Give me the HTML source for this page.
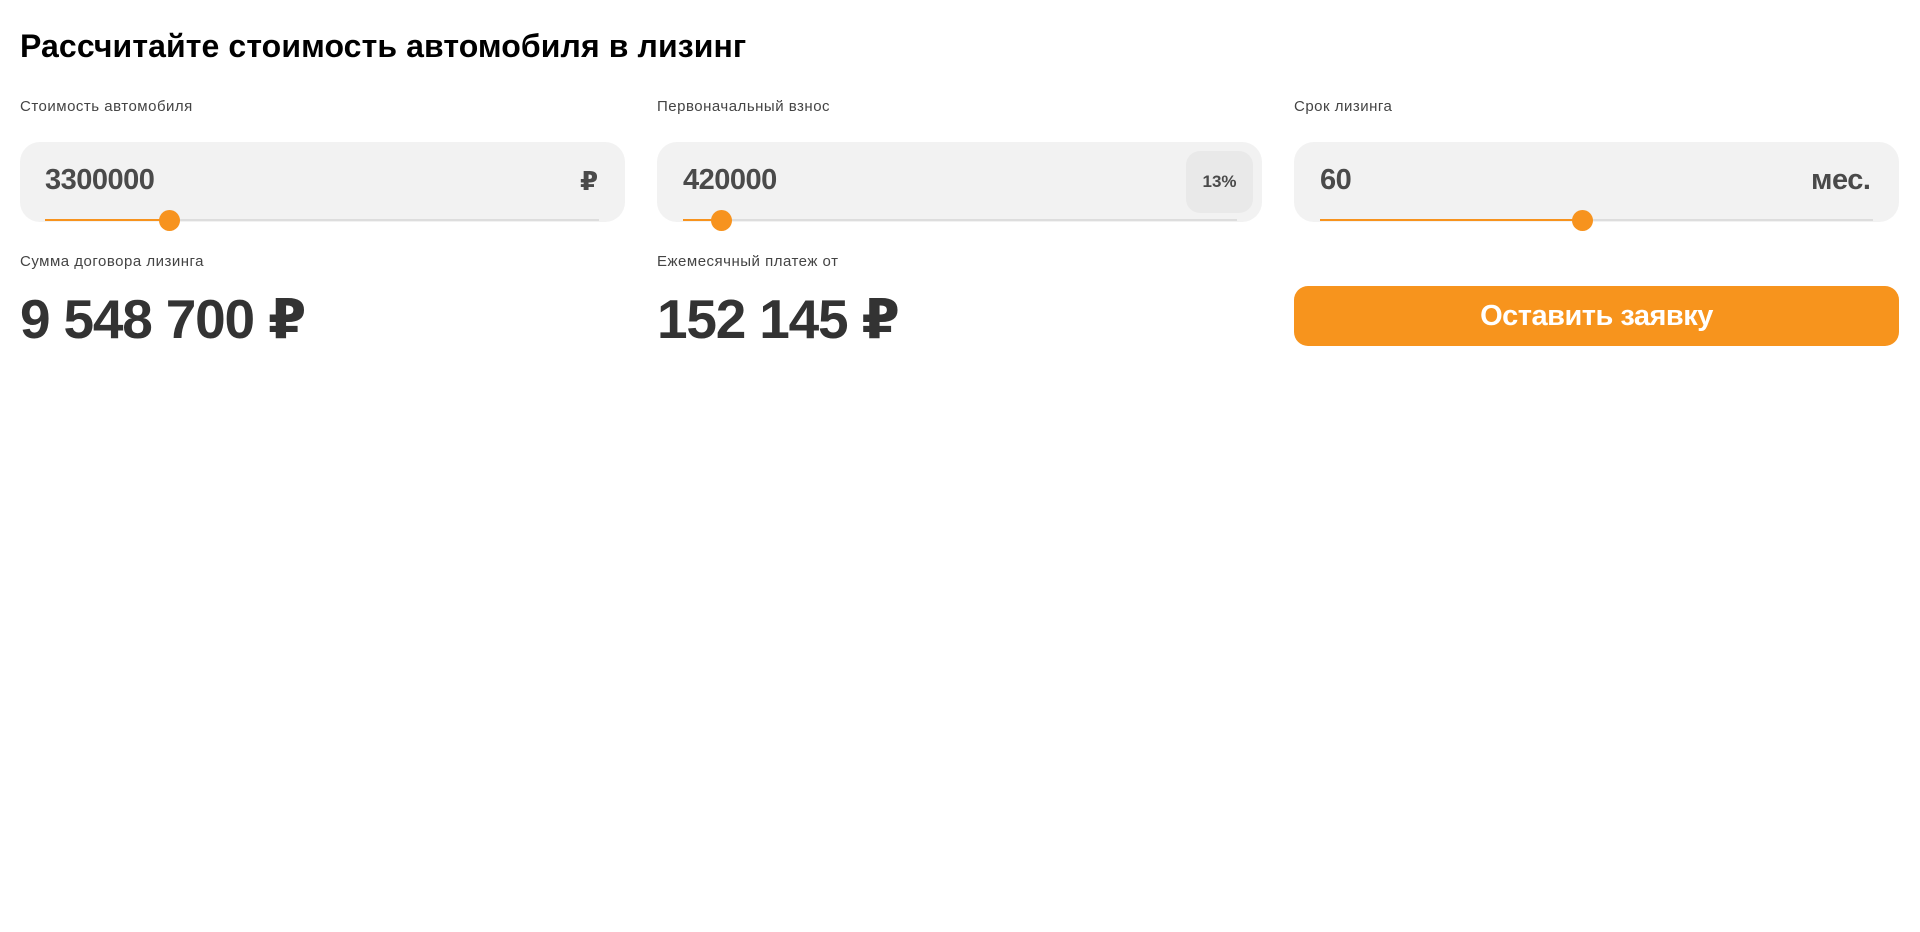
<!DOCTYPE html>
<html><head><meta charset="utf-8"><style>
*{margin:0;padding:0;box-sizing:border-box}
body{width:1920px;height:932px;background:#fff;font-family:"Liberation Sans","DejaVu Sans",sans-serif;position:relative;overflow:hidden;color:#333}
.a{position:absolute}
h1{position:absolute;left:20px;top:28px;font-size:32px;font-weight:bold;color:#000;letter-spacing:0.1px}
.lbl{position:absolute;font-size:15px;color:#444;letter-spacing:0.5px}
.box{position:absolute;top:142px;height:80px;background:#f2f2f2;border-radius:20px}
.num{position:absolute;top:164px;font-size:29px;font-weight:bold;color:#4a4a4a;letter-spacing:-0.5px}
.line{position:absolute;top:219px;height:2px;background:#ddd}
.fill{position:absolute;top:219px;height:2px;background:#f7931e}
.th{position:absolute;top:210px;width:21px;height:21px;border-radius:50%;background:#f7931e}
.big{position:absolute;top:287px;font-size:55px;font-weight:bold;color:#333;letter-spacing:-1.2px}
</style></head><body>
<h1>Рассчитайте стоимость автомобиля в лизинг</h1>
<div class="lbl" style="left:20px;top:98px">Стоимость автомобиля</div>
<div class="lbl" style="left:657px;top:98px">Первоначальный взнос</div>
<div class="lbl" style="left:1294px;top:98px">Срок лизинга</div>

<div class="box" style="left:20px;width:605px"></div>
<div class="num" style="left:45px">3300000</div>
<div class="num" style="left:580px;top:166px;font-size:26px">₽</div>
<div class="line" style="left:45px;width:554px"></div>
<div class="fill" style="left:45px;width:124px"></div>
<div class="th" style="left:159px"></div>

<div class="box" style="left:657px;width:605px"></div>
<div class="a" style="left:1186px;top:151px;width:67px;height:62px;background:#e9e9e9;border-radius:14px;font-size:17px;font-weight:bold;color:#4a4a4a;text-align:center;line-height:62px">13%</div>
<div class="num" style="left:683px">420000</div>
<div class="line" style="left:683px;width:554px"></div>
<div class="fill" style="left:683px;width:38px"></div>
<div class="th" style="left:711px"></div>

<div class="box" style="left:1294px;width:605px"></div>
<div class="num" style="left:1320px">60</div>
<div class="num" style="left:1811px">мес.</div>
<div class="line" style="left:1320px;width:553px"></div>
<div class="fill" style="left:1320px;width:262px"></div>
<div class="th" style="left:1572px"></div>

<div class="lbl" style="left:20px;top:253px">Сумма договора лизинга</div>
<div class="lbl" style="left:657px;top:253px">Ежемесячный платеж от</div>
<div class="big" style="left:20px">9 548 700 ₽</div>
<div class="big" style="left:657px">152 145 ₽</div>

<div class="a" style="left:1294px;top:286px;width:605px;height:60px;background:#f7941d;border-radius:14px;color:#fff;font-size:29px;font-weight:bold;text-align:center;line-height:60px;letter-spacing:-0.5px">Оставить заявку</div>
</body></html>
